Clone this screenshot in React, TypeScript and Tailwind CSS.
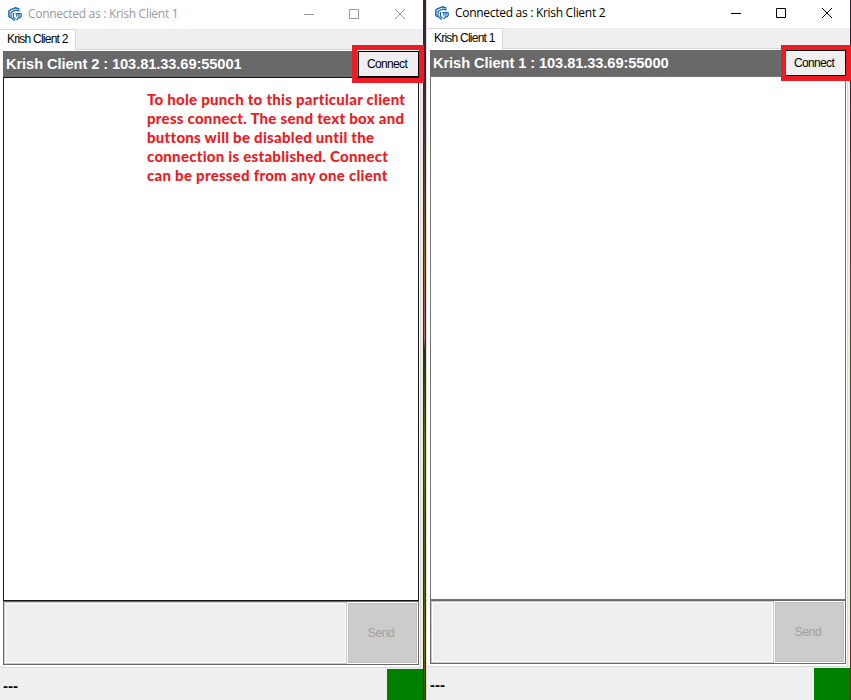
import React from 'react';

type ClientWindowProps = {
  title: string;
  tab: string;
  address: string;
  active?: boolean;
  note?: string[];
};

function Logo() {
  return (
    <svg width="14" height="14" viewBox="0 0 14 14" fill="none" stroke="#1767b1">
      <path strokeWidth="1.5" d="M11.5 2.2 7.6 .9 2.4 2.8 .9 4.2v5.3L2.6 11" />
      <path strokeWidth="1.2" d="M11.6 4.2 8 3.2 4.3 4.5 3 5.8v4.4L5.2 12.6l2 .8" />
      <path strokeWidth="1.2" d="M5.4 6v4.6l2.1 1.1M7.4 6.6h6M13.2 6.6v2.8l-1.5 2M11 6.8v3.4L8.6 13M8.8 6.8v3" />
    </svg>
  );
}

function ClientWindow({ title, tab, address, active = false, note }: ClientWindowProps) {
  return (
    <section className={`relative flex h-[700px] w-[423px] flex-none flex-col bg-[#efefef] font-['Liberation_Sans',sans-serif] ${active ? 'text-black' : 'text-[#999999]'}`}>
      <header className={`flex flex-none items-center bg-white pl-2 ${active ? 'h-7 pb-[3px]' : 'h-[29px] pb-[2px]'}`}>
        <Logo />
        <h1 className="ml-[6px] whitespace-nowrap font-['Open_Sans',sans-serif] text-[12px] leading-4 tracking-[-0.29px]">{title}</h1>
        <svg className="ml-auto mr-[17px]" width="102" height="12" viewBox="0 0 102 12" fill="none" stroke="currentColor">
          <path d="M0 6.5h10" />
          <path d="M45.5 1.5h9v9h-9z" />
          <path d="m91 1 10 10m0-10L91 11" />
        </svg>
      </header>
      <div className="flex h-[21px] flex-none border-b border-[#d9d9d9]">
        <div className="-mb-px h-[21px] w-[76px] border-t border-r border-[#d9d9d9] bg-white pl-[7px] text-[12px] leading-[18px] tracking-[-0.77px] whitespace-nowrap text-black">{tab}</div>
      </div>
      <main className="mr-[2px] flex h-[618px] flex-none flex-col border-r border-b border-[#d9d9d9] bg-white pt-px pr-[1px] pl-[3px]">
        <div className="flex h-[26px] w-[416px] flex-none bg-[#696969]">
          <h2 className="pl-[3px] text-[14.67px] leading-[26px] font-bold tracking-[-0.09px] whitespace-nowrap text-white">{address}</h2>
          <button className="ml-auto h-[26px] w-[61px] border border-black bg-[#efefef] pr-[3px] text-[12px] leading-[24px] tracking-[-0.65px] text-black">Connect</button>
        </div>
        <div className={`h-[524px] w-[416px] flex-none border ${active ? 'border-[#747474]' : 'border-[#161616]'}`}>
          {note && (
            <p className="pt-[12px] pl-[143px] font-['Lato',sans-serif] text-[15px] leading-[19px] font-black tracking-[0.27px] whitespace-nowrap text-[#ed1c24] [font-variant-ligatures:none]">
              {note.map((line) => <span key={line} className="block">{line}</span>)}
            </p>
          )}
        </div>
        <div className="flex h-16 w-[416px] flex-none border border-[#696969] bg-white">
          <div className="h-[62px] w-[343px] border border-[#c8c8c8] p-px">
            <div className="h-full bg-[#efefef]" />
          </div>
          <div className="mt-px ml-px flex h-[60px] w-[69px] items-center justify-center border border-[#c0c0c0] bg-[#cccccc] pr-[3px] text-[12px] tracking-[-0.4px] text-[#a0a0a0]">Send</div>
        </div>
      </main>
      <footer className="flex flex-1 items-end justify-between">
        <span className="self-start pt-[9px] pl-[3px] text-[15px] leading-[18px] font-bold text-black">---</span>
        <div className={`w-9 bg-[#008000] ${active ? 'h-8' : 'h-[31px]'}`} />
      </footer>
      <div className={active ? 'absolute top-[45px] left-[354px] h-9 w-[70px] border-5 border-[#ed1c24]' : 'absolute top-[45px] left-[352px] z-10 h-[38px] w-[72px] border-[5px] border-[#ed1c24]'} />
    </section>
  );
}

export default function App() {
  return (
    <div className="flex h-[700px] w-[851px] overflow-hidden bg-white">
      <ClientWindow
        title="Connected as : Krish Client 1"
        tab="Krish Client 2"
        address="Krish Client 2 : 103.81.33.69:55001"
        note={[
          'To hole punch to this particular client',
          'press connect. The send text box and',
          'buttons will be disabled until the',
          'connection is established. Connect',
          'can be pressed from any one client',
        ]}
      />
      <div className="h-[700px] w-[3px] flex-none border-x border-[#30282c] bg-[linear-gradient(to_bottom,#36203a_0,#4a2c3a_100px,#80501e_220px,#a16a22_270px,#a35b48_300px,#ae6859_340px,#29320a_350px,#3f5007_390px,#6e7500_450px,#4d5b08_550px,#6f6900_650px,#505000_700px)]" />
      <div className="h-[700px] w-px flex-none bg-[#dedede]" />
      <ClientWindow
        active
        title="Connected as : Krish Client 2"
        tab="Krish Client 1"
        address="Krish Client 1 : 103.81.33.69:55000"
      />
      <div className="h-[700px] w-px flex-none bg-[linear-gradient(to_bottom,#302033_0,#583522_260px,#3e461b_350px,#3e4b0a_600px,#712020_700px)]" />
    </div>
  );
}
